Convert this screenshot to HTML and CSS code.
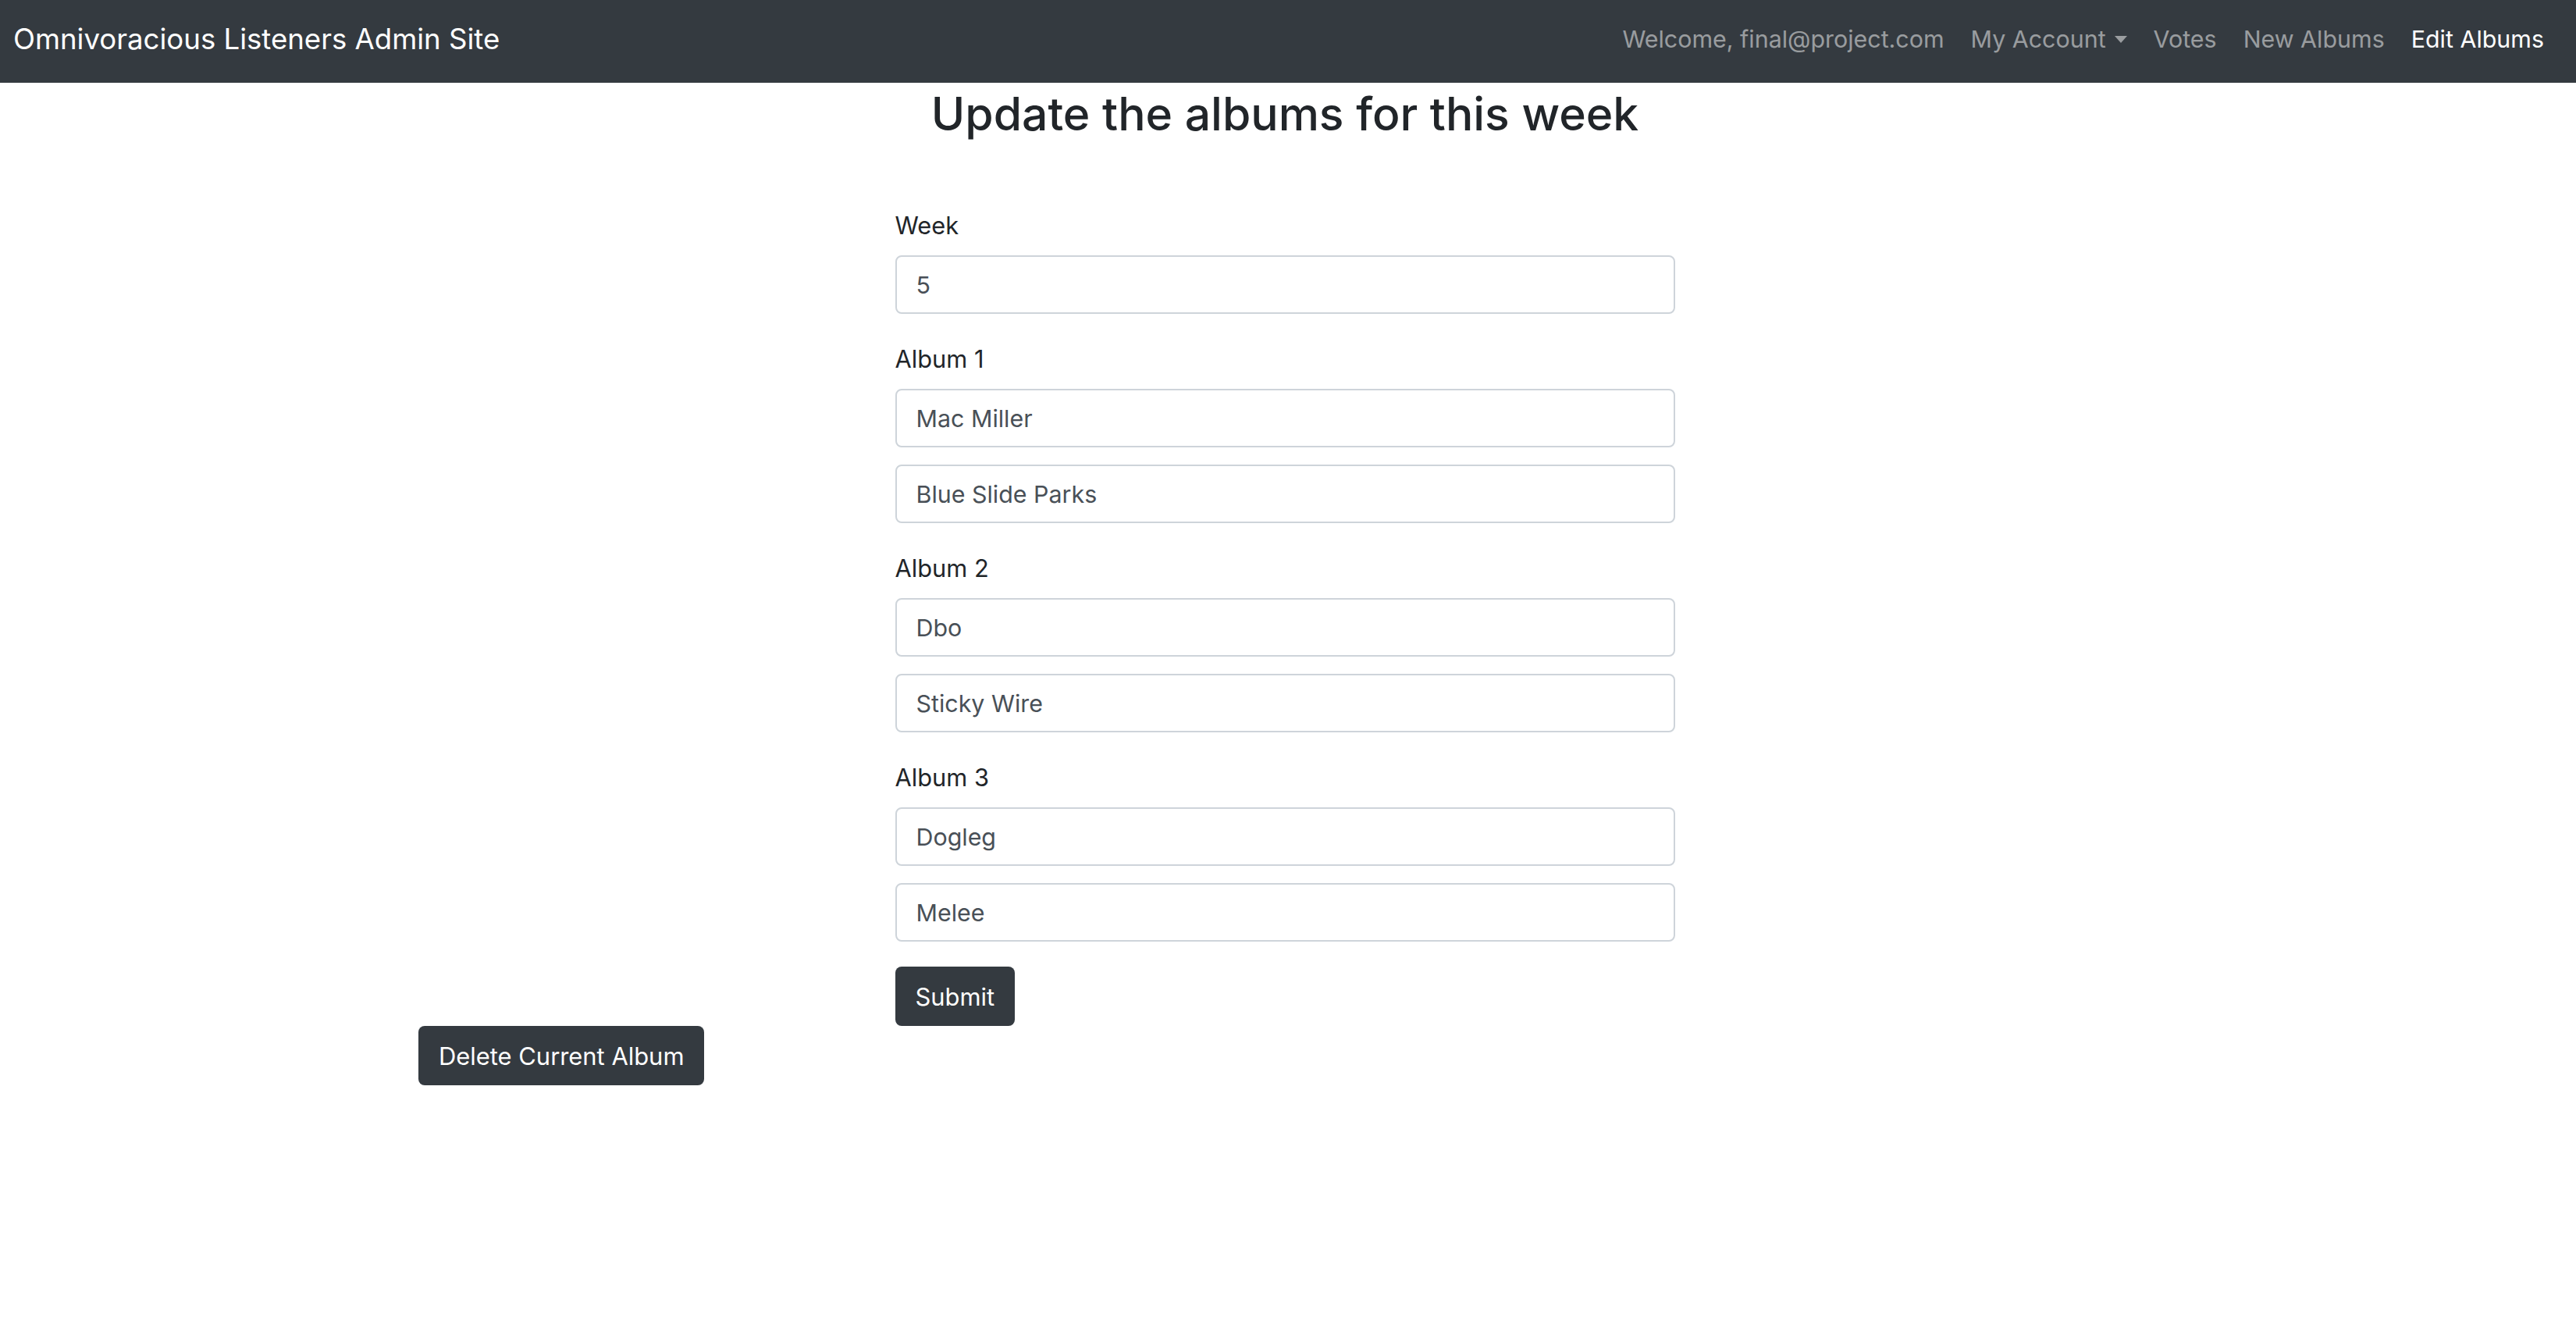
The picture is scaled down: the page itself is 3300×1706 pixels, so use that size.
FILE: index.html
```html
<!DOCTYPE html>
<html lang="en">
<head>
<meta charset="utf-8">
<title>Omnivoracious Listeners Admin Site</title>
<link rel="stylesheet" href="styles.css">
</head>
<body>
<nav class="navbar">
  <a class="brand" href="#">Omnivoracious Listeners Admin Site</a>
  <ul class="nav">
    <li><span class="nav-link">Welcome, final@project.com</span></li>
    <li><a class="nav-link" href="#">My Account<span class="caret"></span></a></li>
    <li><a class="nav-link" href="#">Votes</a></li>
    <li><a class="nav-link" href="#">New Albums</a></li>
    <li><a class="nav-link active" href="#">Edit Albums</a></li>
  </ul>
</nav>
<main class="page">
  <div class="form-wrap">
    <div class="form-col">
      <h2 class="title">Update the albums for this week</h2>
      <form class="album-form">
        <div class="group">
          <label class="label" for="week">Week</label>
          <input class="input" id="week" type="text" value="5">
        </div>
        <div class="group">
          <label class="label" for="a1">Album 1</label>
          <input class="input" id="a1" type="text" value="Mac Miller">
          <input class="input second" type="text" value="Blue Slide Parks">
        </div>
        <div class="group">
          <label class="label" for="a2">Album 2</label>
          <input class="input" id="a2" type="text" value="Dbo">
          <input class="input second" type="text" value="Sticky Wire">
        </div>
        <div class="group last">
          <label class="label" for="a3">Album 3</label>
          <input class="input" id="a3" type="text" value="Dogleg">
          <input class="input second" type="text" value="Melee">
        </div>
        <button class="btn" type="submit">Submit</button>
      </form>
    </div>
  </div>
  <div class="container">
    <button class="btn" type="button">Delete Current Album</button>
  </div>
</main>
</body>
</html>
```

FILE: styles.css
```css
* { box-sizing: border-box; }

body {
  margin: 0;
  background: #ffffff;
  color: #212529;
  font-family: Inter, "Liberation Sans", sans-serif;
}

.navbar {
  display: flex;
  align-items: center;
  justify-content: space-between;
  height: 106px;
  padding: 0 24px 6px 17px;
  background: #343a40;
}

.brand {
  color: #ffffff;
  font-size: 36.6px;
  text-decoration: none;
  white-space: nowrap;
}

.nav {
  display: flex;
  align-items: center;
  margin: 0;
  padding: 0;
  list-style: none;
}

.nav-link {
  display: inline-flex;
  align-items: center;
  padding: 0 17px;
  color: rgba(255, 255, 255, 0.5);
  font-size: 30.4px;
  text-decoration: none;
  white-space: nowrap;
}

.nav-link.active { color: #ffffff; }

.caret {
  display: inline-block;
  width: 0;
  height: 0;
  margin-left: 11px;
  border-top: 9px solid currentColor;
  border-left: 8px solid transparent;
  border-right: 8px solid transparent;
}

.form-wrap {
  padding-right: 8px;
}

.form-col {
  width: 999px;
  margin: 0 auto;
}

.title {
  margin: 4px 0 85px;
  font-size: 58.8px;
  line-height: 72px;
  font-weight: 500;
  text-align: center;
  color: #212529;
}

.album-form {
  display: flex;
  flex-direction: column;
  align-items: flex-start;
}

.group {
  display: flex;
  flex-direction: column;
  width: 100%;
  margin-bottom: 36px;
}

.group.last { margin-bottom: 32px; }

.label {
  display: block;
  margin-bottom: 16px;
  font-size: 30.8px;
  line-height: 44px;
  color: #212529;
}

.input {
  display: block;
  width: 100%;
  height: 75px;
  padding: 0 25px;
  border: 2px solid #ced4da;
  border-radius: 8px;
  background: #ffffff;
  color: #495057;
  font-family: Inter, "Liberation Sans", sans-serif;
  font-size: 30.4px;
}

.input.second { margin-top: 22px; }

.btn {
  display: inline-flex;
  align-items: center;
  height: 76px;
  padding: 0 26px;
  border: 0;
  border-radius: 8px;
  background: #343a40;
  color: #ffffff;
  font-family: Inter, "Liberation Sans", sans-serif;
  font-size: 30.9px;
  cursor: pointer;
}

.container {
  width: 2280px;
  margin: 0 auto;
  padding: 0 26px;
}
```
